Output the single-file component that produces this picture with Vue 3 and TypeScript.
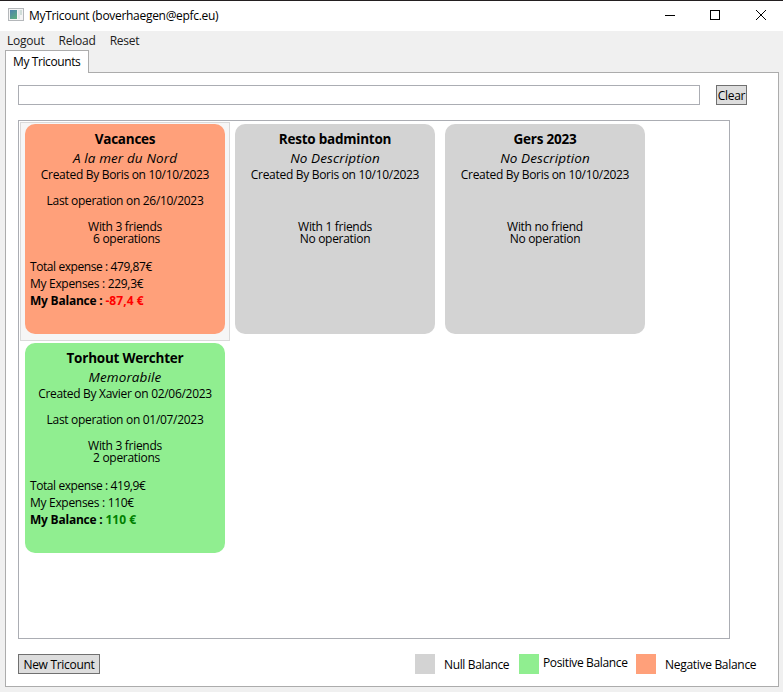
<script setup lang="ts">
type Balance = 'null' | 'positive' | 'negative'

interface Tricount {
  title: string
  description: string
  creator: string
  created: string
  lastOperation?: string
  friends: string
  operations: string
  total?: string
  mine?: string
  amount?: string
  balance: Balance
  selected?: boolean
}

const menu: string[] = ['Logout', 'Reload', 'Reset']

const tricounts: Tricount[] = [
  {
    title: 'Vacances', description: 'A la mer du Nord', creator: 'Boris', created: '10/10/2023',
    lastOperation: '26/10/2023', friends: 'With 3 friends', operations: '6 operations',
    total: '479,87€', mine: '229,3€', amount: '-87,4 €', balance: 'negative', selected: true,
  },
  {
    title: 'Resto badminton', description: 'No Description', creator: 'Boris', created: '10/10/2023',
    friends: 'With 1 friends', operations: 'No operation', balance: 'null',
  },
  {
    title: 'Gers 2023', description: 'No Description', creator: 'Boris', created: '10/10/2023',
    friends: 'With no friend', operations: 'No operation', balance: 'null',
  },
  {
    title: 'Torhout Werchter', description: 'Memorabile', creator: 'Xavier', created: '02/06/2023',
    lastOperation: '01/07/2023', friends: 'With 3 friends', operations: '2 operations',
    total: '419,9€', mine: '110€', amount: '110 €', balance: 'positive',
  },
]
</script>

<template>
  <div class="window">
    <header class="titlebar">
      <svg class="app-icon" width="16" height="14" viewBox="0 0 16 14">
        <defs>
          <linearGradient id="pane" x1="0" y1="0" x2="0.6" y2="1">
            <stop offset="0" stop-color="#4c80ae" />
            <stop offset="1" stop-color="#5aa982" />
          </linearGradient>
        </defs>
        <rect x="0.5" y="0.5" width="15" height="12" fill="#f4f4f4" stroke="#b4b7ba" />
        <rect x="2" y="2" width="7" height="9" fill="url(#pane)" />
        <rect x="10" y="2" width="2" height="9" fill="#e3e7ea" />
        <rect x="12" y="2" width="2" height="5" fill="#d0ddd8" />
      </svg>
      <span class="caption">MyTricount (boverhaegen@epfc.eu)</span>
      <svg class="controls" width="103" height="12" viewBox="0 0 103 12" fill="none" stroke="#000">
        <path d="M1 6.5H11" />
        <rect x="46.5" y="1.5" width="9" height="9" />
        <path d="M92 1L102 11M102 1L92 11" />
      </svg>
    </header>

    <nav class="menu">
      <span v-for="item in menu" :key="item">{{ item }}</span>
    </nav>

    <div class="tab">My Tricounts</div>

    <main class="panel">
      <div class="search">
        <input class="filter" type="text" />
        <button class="btn clear">Clear</button>
      </div>

      <section class="list">
        <div v-for="t in tricounts" :key="t.title" class="item" :class="{ selected: t.selected }">
          <article class="card" :class="t.balance">
            <h2 class="title">{{ t.title }}</h2>
            <p class="description">{{ t.description }}</p>
            <p class="created">Created By {{ t.creator }} on {{ t.created }}</p>
            <p class="last"><template v-if="t.lastOperation">Last operation on {{ t.lastOperation }}</template></p>
            <p class="friends">{{ t.friends }}</p>
            <p class="operations" :class="{ counted: t.total }">{{ t.operations }}</p>
            <div v-if="t.total" class="figures">
              <p class="total">Total expense : {{ t.total }}</p>
              <p class="mine">My Expenses : {{ t.mine }}</p>
              <p class="balance">My Balance : <span class="amount">{{ t.amount }}</span></p>
            </div>
          </article>
        </div>
      </section>

      <footer class="footer">
        <button class="btn new">New Tricount</button>
        <div class="legend">
          <i class="swatch null"></i><span class="label label-null">Null Balance</span>
          <i class="swatch positive"></i><span class="label label-positive">Positive Balance</span>
          <i class="swatch negative"></i><span class="label label-negative">Negative Balance</span>
        </div>
      </footer>
    </main>
  </div>
</template>

<style>
body {
  margin: 0;
  overflow: hidden;
}
</style>

<style scoped>
* {
  box-sizing: border-box;
}
.window {
  display: flex;
  flex-direction: column;
  width: 783px;
  height: 692px;
  background: #f0f0f0;
  border-top: 1px solid #231f20;
  color: #000;
  font: 12px/16px "Segoe UI", "Open Sans", "Noto Sans", sans-serif;
  letter-spacing: -0.3px;
  white-space: nowrap;
}
.titlebar {
  display: flex;
  align-items: center;
  height: 30px;
  padding: 0 16px 2px 8px;
  background: #fff;
}
.caption {
  margin-left: 5px;
  padding-top: 1px;
}
.controls {
  margin-left: auto;
}
.menu {
  display: flex;
  gap: 14px;
  height: 19px;
  padding: 2px 7px 0;
  color: #212121;
  letter-spacing: -0.22px;
}
.tab {
  position: relative;
  width: 84px;
  height: 23px;
  margin: 0 0 -1px 5px;
  padding: 3px 0 0 7px;
  background: #fff;
  border: 1px solid #acacac;
  border-bottom: 0;
  letter-spacing: -0.4px;
}
.panel {
  display: flex;
  flex-direction: column;
  width: 774px;
  height: 615px;
  margin-left: 5px;
  padding: 12px;
  background: #fff;
  border: 1px solid #acacac;
}
.search {
  display: flex;
  gap: 16px;
}
.filter {
  width: 682px;
  height: 20px;
  padding: 0 2px;
  border: 1px solid #abadb3;
  font: inherit;
  outline: none;
}
.btn {
  height: 20px;
  padding: 1px 0 0;
  background: #ddd;
  border: 1px solid #707070;
  border-radius: 0;
  color: #000;
  font: inherit;
  letter-spacing: inherit;
}
.clear {
  width: 31px;
}
.list {
  display: grid;
  grid-template-columns: repeat(3, 210px);
  grid-auto-rows: 219px;
  width: 712px;
  height: 519px;
  margin-top: 15px;
  padding: 1px;
  border: 1px solid #abadb3;
}
.item {
  padding: 1px 4px;
  border: 1px solid transparent;
}
.item.selected {
  background: #f6f6f6;
  border-color: #dadada;
}
.card {
  width: 200px;
  height: 210px;
  padding: 5px 5px 0;
  border-radius: 10px;
  text-align: center;
}
.null {
  background: #d3d3d3;
}
.positive {
  background: #90ee90;
}
.negative {
  background: #ffa07a;
}
.title,
.card p {
  margin: 0;
}
.title {
  font-size: 13.5px;
  font-weight: 700;
  line-height: 20px;
  letter-spacing: -0.24px;
}
.description {
  font-size: 13.5px;
  font-style: italic;
  line-height: 18px;
  letter-spacing: 0.12px;
}
.last {
  height: 16px;
}
.card .last {
  margin: 10px 0;
}
.friends,
.operations {
  line-height: 12px;
}
.card .friends {
  padding-top: 2px;
}
.counted {
  padding-left: 3px;
}
.figures {
  padding-top: 13px;
  text-align: left;
  line-height: 17px;
}
.total {
  letter-spacing: -0.42px;
}
.balance {
  font-weight: 700;
  letter-spacing: -0.22px;
}
.amount {
  letter-spacing: 0.05px;
}
.negative .amount {
  color: #f00;
}
.positive .amount {
  color: #008000;
}
.footer {
  display: flex;
  justify-content: space-between;
  margin-top: 15px;
}
.new {
  width: 82px;
}
.legend {
  display: flex;
  width: 351px;
  letter-spacing: -0.36px;
}
.swatch {
  width: 20px;
  height: 20px;
}
.label {
  padding-top: 3px;
}
.label-null {
  width: 84px;
  padding-left: 9px;
}
.label-positive {
  width: 97px;
  padding: 1px 0 0 4px;
}
.label-negative {
  padding-left: 9px;
  letter-spacing: -0.3px;
}
</style>
